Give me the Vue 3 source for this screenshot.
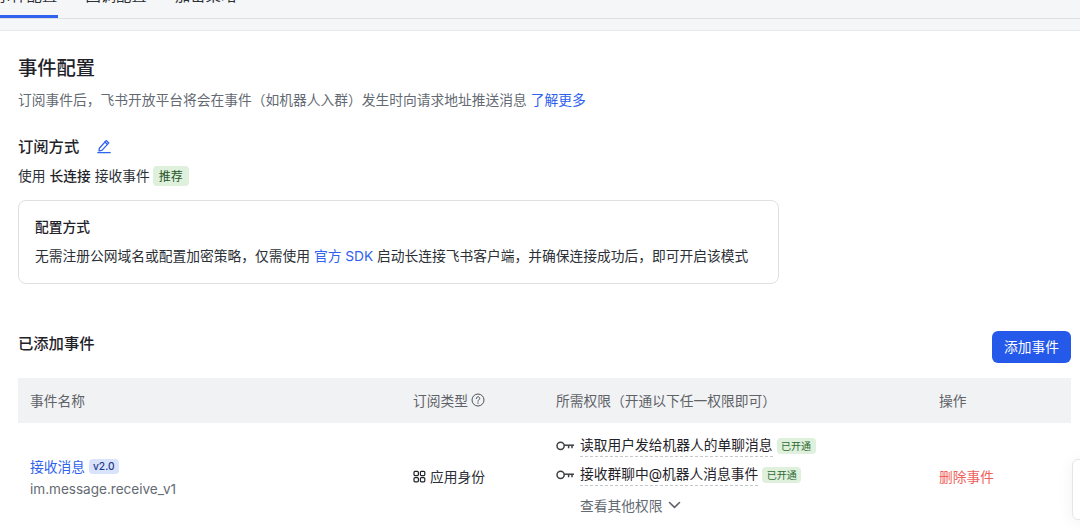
<script setup>
const perms = [
  { name: '读取用户发给机器人的单聊消息' },
  { name: '接收群聊中@机器人消息事件' }
]
</script>

<template>
  <div class="page">
    <div class="topbar">
      <div class="tabs">
        <div class="tab active">事件配置</div>
        <div class="tab">回调配置</div>
        <div class="tab">加密策略</div>
      </div>
    </div>
    <main class="content">
      <h1 class="title">事件配置</h1>
      <p class="desc">订阅事件后，飞书开放平台将会在事件（如机器人入群）发生时向请求地址推送消息 <a class="link">了解更多</a></p>

      <div class="sub-head">
        <h2 class="h2">订阅方式</h2>
        <svg class="edit" width="16" height="16" viewBox="0 0 16 16" fill="none" stroke="#2f62ee" stroke-width="1.3" stroke-linejoin="round" stroke-linecap="round">
          <path d="M3.4 10.2 10.2 2.6l2.6 2.3-6.9 7.5-2.9.4z" />
          <path d="M8.9 4l2.6 2.4" />
          <path d="M1.8 14.6h12.4" />
        </svg>
      </div>
      <div class="mode">
        <span>使用 </span><b class="strong">长连接</b><span> 接收事件</span>
        <span class="tag-rec">推荐</span>
      </div>

      <section class="card">
        <div class="card-title">配置方式</div>
        <div class="card-text">无需注册公网域名或配置加密策略，仅需使用 <a class="link">官方 SDK</a> 启动长连接飞书客户端，并确保连接成功后，即可开启该模式</div>
      </section>

      <div class="added-head">
        <h2 class="h2 added-title">已添加事件</h2>
        <button class="add-btn">添加事件</button>
      </div>

      <div class="table">
        <div class="row head">
          <div class="c1">事件名称</div>
          <div class="c2 type-head">订阅类型
            <svg width="14" height="14" viewBox="0 0 14 14" fill="none" stroke="#4e5358" stroke-width="1">
              <circle cx="7" cy="7" r="6" />
              <path d="M5.3 5.5a1.7 1.7 0 1 1 2.6 1.4c-.6.4-.9.6-.9 1.3" stroke-linecap="round" />
              <path d="M7 9.7v.7" stroke-linecap="round" />
            </svg>
          </div>
          <div class="c3">所需权限（开通以下任一权限即可）</div>
          <div class="c4">操作</div>
        </div>
        <div class="row body">
          <div class="c1">
            <div class="ev-line"><a class="link ev-name">接收消息</a><span class="ver">v2.0</span></div>
            <div class="ev-key">im.message.receive_v1</div>
          </div>
          <div class="c2 identity">
            <svg width="13" height="13" viewBox="0 0 13 13" fill="none" stroke="#1f2329" stroke-width="1.2">
              <rect x="1" y="1.4" width="4.4" height="4.2" rx="1" />
              <rect x="7.4" y="1.4" width="4.4" height="4.2" rx="1" />
              <rect x="1" y="7.6" width="4.4" height="4.2" rx="1" />
              <rect x="7.4" y="7.6" width="4.4" height="4.2" rx="1" />
            </svg>
            <span>应用身份</span>
          </div>
          <div class="c3 perms">
            <div v-for="p in perms" :key="p.name" class="perm">
              <svg class="key" width="19" height="10" viewBox="0 0 19 10" fill="none" stroke="#3c4043" stroke-width="1.5">
                <circle cx="4.6" cy="4.8" r="3.6" />
                <path d="M8 4.2h10" />
                <path d="M12.6 4.2v3M16 4.2v3" />
              </svg>
              <span class="perm-name">{{ p.name }}</span>
              <span class="tag-open">已开通</span>
            </div>
            <div class="more">查看其他权限
              <svg width="13" height="8" viewBox="0 0 13 8" fill="none" stroke="#5f6368" stroke-width="1.6" stroke-linecap="round" stroke-linejoin="round">
                <path d="M1.5 1.5 6.5 6.3l5-4.8" />
              </svg>
            </div>
          </div>
          <div class="c4 del">删除事件</div>
        </div>
      </div>
    </main>
    <div class="float-widget"></div>
  </div>
</template>

<style>
html, body { margin: 0; background: #fff; overflow: hidden; }
</style>

<style scoped>
.page {
  position: relative;
  width: 1080px;
  height: 529px;
  overflow: hidden;
  background: #fff;
  font-family: Inter, "Noto Sans CJK SC", sans-serif;
  font-size: 13.75px;
  color: #1f2329;
}
.topbar {
  height: 31px;
  box-sizing: border-box;
  background: #f5f6f7;
  border-bottom: 1px solid #e6e8eb;
}
.tabs {
  display: flex;
  gap: 28px;
  height: 19px;
  box-sizing: border-box;
  margin-left: -4px;
  border-bottom: 1px solid #dee0e3;
  align-items: flex-end;
  overflow: hidden;
}
.tab {
  width: 61.5px;
  height: 33px;
  flex: none;
  line-height: 22px;
  font-size: 15.3px;
  color: #2b2f36;
  white-space: nowrap;
  box-sizing: border-box;
}
.tab.active { border-bottom: 3px solid #2f62ee; }
.content { padding: 0 9px 0 18px; }
.title {
  margin: 23px 0 0;
  font-size: 19.3px;
  line-height: 28px;
  font-weight: 500;
  color: #1f2329;
}
.desc {
  margin: 7px 0 0;
  line-height: 22px;
  color: #646a73;
}
.link { color: #2f62ee; }
.sub-head {
  display: flex;
  align-items: center;
  gap: 17px;
  margin-top: 24px;
  height: 24px;
}
.h2 {
  margin: 0;
  font-size: 15.3px;
  line-height: 24px;
  font-weight: 500;
  color: #1f2329;
}
.edit { margin-top: -2px; }
.mode {
  display: flex;
  align-items: center;
  gap: 4px;
  margin-top: 5px;
  height: 22px;
  color: #2b2f36;
}
.strong { font-weight: 500; color: #1f2329; }
.tag-rec {
  margin: 1px 0 0 -1px;
  padding: 0 6px;
  height: 20px;
  line-height: 21px;
  font-size: 12px;
  border-radius: 4px;
  background: #dff0dc;
  color: #28572b;
}
.card {
  width: 761px;
  height: 84px;
  box-sizing: border-box;
  margin-top: 14px;
  padding: 16px 16px 0;
  border: 1px solid #dee0e3;
  border-radius: 8px;
}
.card-title {
  font-size: 13.75px;
  line-height: 20px;
  font-weight: 500;
  color: #1f2329;
}
.card-text {
  margin-top: 8px;
  line-height: 22px;
  color: #2b2f36;
  white-space: nowrap;
}
.added-head {
  display: flex;
  justify-content: space-between;
  align-items: flex-start;
  margin-top: 47px;
  height: 47px;
}
.added-title { margin-top: 1px; }
.add-btn {
  width: 79px;
  height: 32px;
  border: none;
  padding: 0 0 2px;
  border-radius: 6px;
  background: #2559ea;
  color: #fff;
  font: inherit;
  font-size: 13.75px;
}
.table { width: 1053px; }
.row { display: flex; }
.head {
  height: 45px;
  box-sizing: border-box;
  padding-bottom: 2px;
  align-items: center;
  background: #f1f2f4;
  color: #5f6368;
}
.c1 { width: 395px; padding-left: 12px; box-sizing: border-box; }
.c2 { width: 143px; }
.c3 { width: 383px; }
.c4 { flex: 1; }
.type-head { display: flex; align-items: center; gap: 3px; }
.body { height: 106px; align-items: center; }
.ev-line { display: flex; align-items: center; gap: 4px; height: 22px; margin-top: 2px; }
.ev-name { font-size: 13.75px; }
.ver {
  height: 15px;
  line-height: 15px;
  margin-top: 1px;
  padding: 0 4px;
  border-radius: 4px;
  font-size: 10.2px;
  font-weight: 500;
  background: #d9e3fb;
  color: #1d3a8a;
}
.ev-key { margin-top: 1px; line-height: 22px; color: #646a73; font-size: 13.55px; }
.identity { display: flex; align-items: center; gap: 4px; color: #2b2f36; }
.perms { margin-top: -2px; }
.perm {
  display: flex;
  align-items: center;
  height: 22px;
  margin-bottom: 7.5px;
}
.key { margin-right: 5px; }
.perm-name {
  border-bottom: 1px dashed #c4c7cc;
  line-height: 21px;
  color: #1f2329;
}
.tag-open {
  margin-left: 4px;
  height: 16px;
  line-height: 16px;
  padding: 0 4.5px;
  font-size: 10px;
  border-radius: 4px;
  background: #dff0dc;
  color: #2e6b34;
}
.more {
  display: flex;
  align-items: center;
  gap: 5px;
  margin-top: 2px;
  padding-left: 24px;
  height: 22px;
  color: #646a73;
}
.del { color: #f0605a; }
.float-widget {
  position: absolute;
  left: 1072px;
  top: 459px;
  width: 30px;
  height: 61px;
  box-sizing: border-box;
  background: #fff;
  border: 1px solid #e4e6e9;
  border-radius: 6px;
  box-shadow: 0 2px 16px rgba(0, 0, 0, 0.06);
}
</style>
